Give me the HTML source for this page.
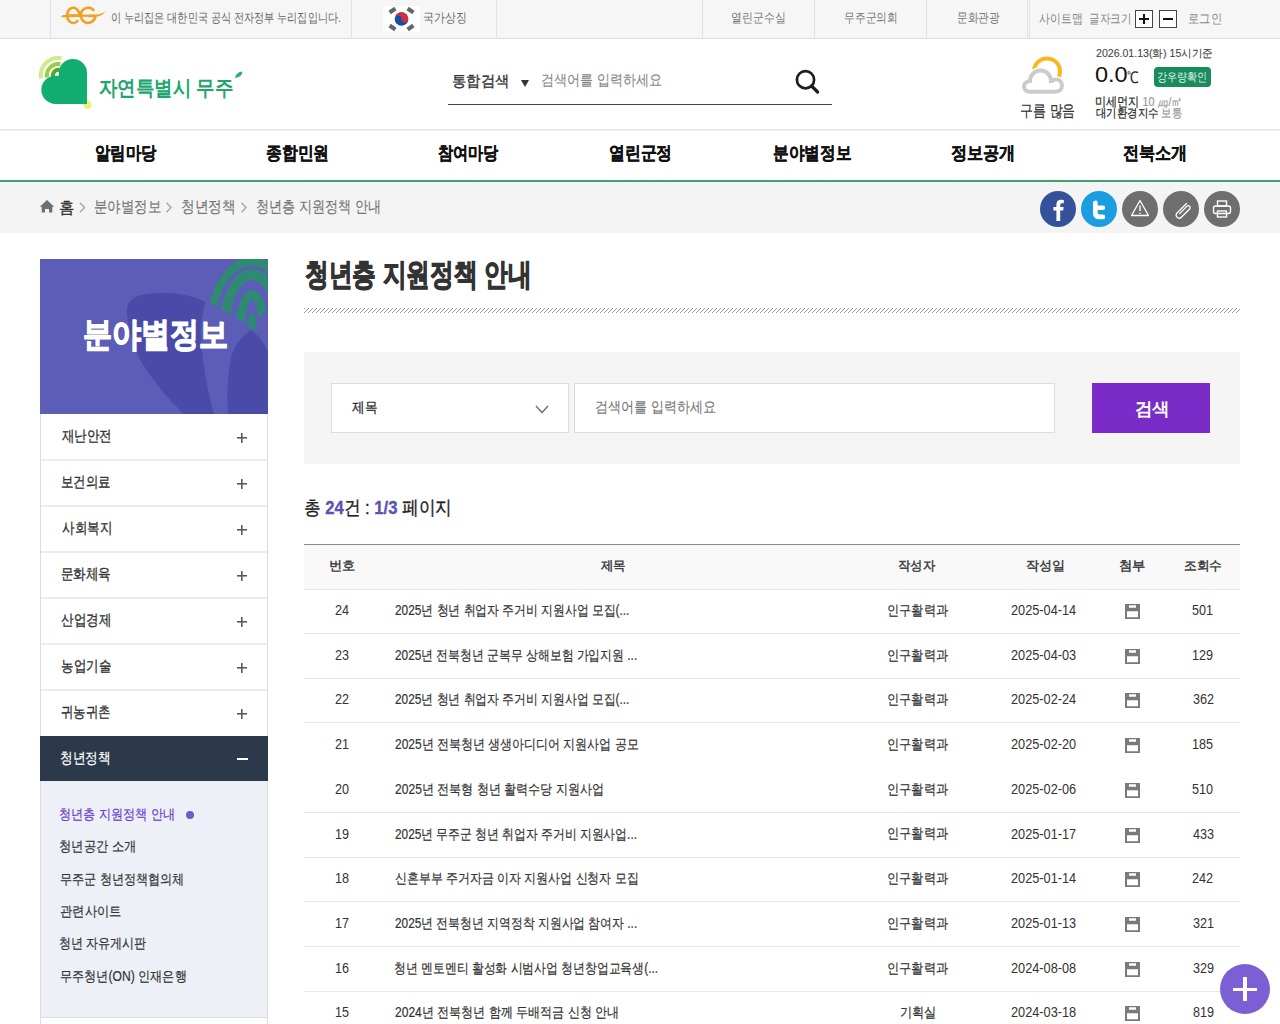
<!DOCTYPE html>
<html lang="ko"><head><meta charset="utf-8"><title>청년층 지원정책 안내</title><style>
html,body{margin:0;padding:0;background:#fff;width:1280px;height:1024px;overflow:hidden;font-family:'Liberation Sans',sans-serif}
.a{position:absolute}
.t{position:absolute;white-space:nowrap;line-height:1;transform-origin:0 0}
.vl{top:0;width:1px;height:38px;background:#e2e2e2}
.box18{width:16px;height:16px;border:1px solid #444;background:#fff}
.circ{top:190.5px;width:36px;height:36px;border-radius:50%}
.sep{left:41px;width:226px;height:2px;background:#ececec}
.plus{left:237px;width:10px;height:10px;background:linear-gradient(#5a5a5a,#5a5a5a) 0 4.2px/10px 1.6px no-repeat,linear-gradient(#5a5a5a,#5a5a5a) 4.2px 0/1.6px 10px no-repeat}
.rl{left:304px;width:936px;height:1px;background:#e8e8e8}
</style></head><body>
<!-- top bar -->
<div class="a" style="left:0;top:0;width:1280px;height:38px;background:#f6f6f6"></div>
<div class="a" style="left:0;top:38px;width:1280px;height:1px;background:#dedede"></div>
<div class="a vl" style="left:50px"></div>
<div class="a vl" style="left:351px"></div>
<div class="a vl" style="left:496px"></div>
<div class="a vl" style="left:702px"></div>
<div class="a vl" style="left:814px"></div>
<div class="a vl" style="left:926px"></div>
<div class="a vl" style="left:1027px"></div>
<div class="a vl" style="left:1029px"></div>
<svg class="a" style="left:58px;top:4px" width="50" height="22" viewBox="0 0 50 22">
  <g fill="none" stroke="#f0a126" stroke-width="2.6" stroke-linecap="round">
    <path d="M10.5 11.5 H21.5 A6.2 7.6 0 1 0 19.5 17"/>
    <path d="M35.5 6 A7.4 7.6 0 1 0 37.5 12 H31"/>
  </g>
  <path d="M3 12.5 Q4 10.6 8 10.8 L40 10.6 Q44 9.5 48 7.5 Q45 11 40 12.6 L8 13.3 Q4 13.6 3 12.5 Z" fill="#f0a126"/>
</svg>
<div class="a" style="left:383px;top:6px;width:37px;height:26px;background:#fff"></div>
<svg class="a" style="left:383px;top:6px" width="37" height="26" viewBox="0 0 37 26">
  <circle cx="18.5" cy="13" r="6.8" fill="#0f4fa8"/>
  <path d="M11.7 13 A6.8 6.8 0 0 1 25.3 13 A3.4 3.4 0 0 1 18.5 13 A3.4 3.4 0 0 0 11.7 13 Z" fill="#d72c3c"/>
  <g fill="#666">
    <rect x="6" y="2.5" width="7" height="4" transform="rotate(-35 9.5 4.5)"/>
    <rect x="24" y="2.5" width="7" height="4" transform="rotate(35 27.5 4.5)"/>
    <rect x="6" y="19.5" width="7" height="4" transform="rotate(35 9.5 21.5)"/>
    <rect x="24" y="19.5" width="7" height="4" transform="rotate(-35 27.5 21.5)"/>
  </g>
</svg>
<div class="a box18" style="left:1135px;top:10px"><div class="a" style="left:3px;top:7px;width:10px;height:2.4px;background:#111"></div><div class="a" style="left:6.8px;top:3px;width:2.4px;height:10px;background:#111"></div></div>
<div class="a box18" style="left:1159px;top:10px"><div class="a" style="left:3px;top:7px;width:10px;height:2.4px;background:#111"></div></div>

<!-- header -->
<svg class="a" style="left:36px;top:52px" width="60" height="60" viewBox="36 52 60 60">
  <g fill="none" stroke-width="4">
    <path d="M41 78.5 A17.5 17.5 0 0 1 61.5 58.3" stroke="#cfe98f"/>
    <path d="M47 77.5 A11.5 11.5 0 0 1 60.5 64.2" stroke="#98cd45"/>
    <path d="M53 76.5 A5.5 5.5 0 0 1 59.5 70" stroke="#5aa628"/>
  </g>
  <path d="M87 104 V73 A14.1 14.1 0 0 0 58.8 73 V75.7 H55.5 A14.15 14.15 0 0 0 55.5 104 Z" fill="#12ad70"/>
  <circle cx="87.5" cy="104.7" r="4.2" fill="#e6ee5e" opacity="0.85"/>
  <path d="M87 104 V100 A4.2 4.2 0 0 0 83.3 104 Z" fill="#12ad70"/>
</svg>
<svg class="a" style="left:234px;top:70px" width="10" height="10" viewBox="0 0 10 10"><path d="M1 8 Q2 2 8.5 1.5 Q8 7 1 8 Z" fill="#2fb06e"/></svg>
<div class="a" style="left:520.5px;top:79.5px;width:0;height:0;border-left:4px solid transparent;border-right:4px solid transparent;border-top:7px solid #333"></div>
<div class="a" style="left:448px;top:104px;width:384px;height:1.2px;background:#444"></div>
<svg class="a" style="left:790px;top:65px" width="34" height="34" viewBox="790 65 34 34">
  <circle cx="805.5" cy="79.7" r="8.6" fill="none" stroke="#1e1e1e" stroke-width="2.7"/>
  <path d="M811.6 86 L817.6 92" stroke="#1e1e1e" stroke-width="3.2" stroke-linecap="round"/>
</svg>
<svg class="a" style="left:1015px;top:50px" width="55" height="50" viewBox="1015 50 55 50"><circle cx="1047" cy="71.4" r="13" fill="none" stroke="#f7b81c" stroke-width="4"/><circle cx="1040.5" cy="81" r="14.0" fill="#fff"/><circle cx="1056" cy="85.5" r="9.5" fill="#fff"/><circle cx="1029" cy="86.5" r="8.5" fill="#fff"/><rect x="1029" y="86" width="27" height="9.2" fill="#fff"/><circle cx="1040.5" cy="81" r="12.5" fill="#cbcbcb"/><circle cx="1056" cy="85.5" r="8" fill="#cbcbcb"/><circle cx="1029" cy="86.5" r="7" fill="#cbcbcb"/><rect x="1029" y="86" width="27" height="7.7" fill="#cbcbcb"/><circle cx="1040.5" cy="81" r="8.5" fill="#fff"/><circle cx="1056" cy="85.5" r="4" fill="#fff"/><circle cx="1029" cy="86.5" r="3" fill="#fff"/><rect x="1029" y="83" width="27" height="6.7" fill="#fff"/></svg>
<div class="a" style="left:1153.5px;top:67.2px;width:57.3px;height:20.1px;background:#1a8b5c;border-radius:4px"></div>

<!-- nav -->
<div class="a" style="left:0;top:129px;width:1280px;height:1px;background:#e4e4e4"></div>
<div class="a" style="left:0;top:130px;width:1280px;height:1px;background:#f3f3f3"></div>
<div class="a" style="left:0;top:180px;width:1280px;height:2px;background:#43a074"></div>
<div class="a" style="left:0;top:182px;width:1280px;height:51px;background:#f4f4f4"></div>
<svg class="a" style="left:39px;top:199px" width="16" height="15" viewBox="39 199 16 15">
  <path d="M47 200 L54.2 206.8 L52.3 206.8 L52.3 212.5 L49 212.5 L49 209 L45 209 L45 212.5 L41.7 212.5 L41.7 206.8 L39.8 206.8 Z" fill="#6f6f6f"/>
</svg>
<svg class="a" style="left:76px;top:200px" width="180" height="16" viewBox="76 200 180 16">
  <g fill="none" stroke="#a9a9a9" stroke-width="1.5">
    <path d="M80 202.8 L84.5 207.5 L80 212.2"/>
    <path d="M166.5 202.8 L171 207.5 L166.5 212.2"/>
    <path d="M241.5 202.8 L246 207.5 L241.5 212.2"/>
  </g>
</svg>
<!-- social -->
<div class="a circ" style="left:1040px;background:#34529c"></div>
<div class="a circ" style="left:1081px;background:#1b9de0"></div>
<div class="a circ" style="left:1122px;background:#6e6e6e"></div>
<div class="a circ" style="left:1163px;background:#6e6e6e"></div>
<div class="a circ" style="left:1204px;background:#6e6e6e"></div>
<svg class="a" style="left:1040px;top:190px" width="200" height="37" viewBox="1040 190 200 37">
  <path d="M1060.2 221 V210.5 H1063.2 L1063.6 207 H1060.2 V204.8 Q1060.2 203.2 1062 203.2 H1063.8 V199.9 Q1062.6 199.7 1061 199.7 Q1056.4 199.7 1056.4 204.4 V207 H1053.4 V210.5 H1056.4 V221 Z" fill="#fff"/>
  <path d="M1094 201 Q1096.6 199.8 1097.6 201.6 V205.6 H1103 Q1105.2 205.6 1105.2 207.8 Q1105.2 210 1103 210 H1097.6 V212.3 Q1097.6 214.6 1100 214.6 H1103 Q1105.2 214.6 1105.2 216.9 Q1105.2 219.2 1103 219.2 H1099.5 Q1093 219.2 1093 213.2 V202.6 Q1093 201.6 1094 201 Z" fill="#fff"/>
  <path d="M1140 200.5 L1148.5 215.5 H1131.5 Z" fill="none" stroke="#fff" stroke-width="1.3" stroke-linejoin="round"/>
  <path d="M1140 205.5 V211" stroke="#fff" stroke-width="1.4"/><circle cx="1140" cy="213.3" r="0.8" fill="#fff"/>
  <path d="M1186.5 203.5 L1177 213 Q1175 215.6 1177.4 217.6 Q1179.8 219.2 1181.6 217 L1189.6 209 Q1190.8 207.4 1189.6 206.2 Q1188.2 205 1186.8 206.4 L1179.6 213.6" fill="none" stroke="#fff" stroke-width="1.3" stroke-linecap="round"/>
  <g fill="none" stroke="#fff" stroke-width="1.4">
    <rect x="1217.5" y="201" width="9" height="5"/>
    <rect x="1213.5" y="206" width="17" height="7.5" rx="2"/>
    <rect x="1217.5" y="211" width="9" height="6"/>
  </g>
</svg>

<!-- sidebar -->
<div class="a" style="left:40px;top:259px;width:228px;height:155px;background:#5c5db6;overflow:hidden">
<svg class="a" style="left:0;top:0" width="228" height="155" viewBox="40 259 228 155">
  <path d="M127 312 Q126 296 150 293.5 Q185 291 205 302 Q198 330 203 360 Q207 390 214 414 H184 Q160 392 140 360 Q128 334 127 312 Z" fill="#4a4aa8"/>
  <path d="M228 414 Q226 385 231 356 Q238 338 251 330 Q262 338 268 352 V414 Z" fill="#4a4aa8"/>
  <defs><clipPath id="wedge"><path d="M252 326.5 L150 269.4 L150 240 L300 240 L300 269.4 Z"/></clipPath></defs>
  <g clip-path="url(#wedge)" fill="#2f8a73" fill-rule="evenodd">
    <path d="M206 331 A46 74 0 0 1 298 331 Z M214 331 A38 65 0 0 1 290 331 Z"/>
    <path d="M219 331 A33 62 0 0 1 285 331 Z M229 331 A23 51 0 0 1 275 331 Z"/>
    <path d="M235 331 A17 41 0 0 1 269 331 Z M245 331 A7 31 0 0 1 259 331 Z"/>
  </g>
  <path d="M252.5 312 Q257.5 318 256.5 325 Q255 330 252.5 330 Q250 330 248.5 325 Q247.5 318 252.5 312 Z" fill="#2f8a73"/>
</svg>
</div>
<div class="a" style="left:40px;top:414px;width:1px;height:610px;background:#dcdcdc"></div>
<div class="a" style="left:267px;top:414px;width:1px;height:610px;background:#dcdcdc"></div>
<div class="a sep" style="top:459px"></div>
<div class="a sep" style="top:505px"></div>
<div class="a sep" style="top:551px"></div>
<div class="a sep" style="top:597px"></div>
<div class="a sep" style="top:643px"></div>
<div class="a sep" style="top:689px"></div>
<div class="a plus" style="top:432.5px"></div>
<div class="a plus" style="top:478.5px"></div>
<div class="a plus" style="top:524.5px"></div>
<div class="a plus" style="top:570.5px"></div>
<div class="a plus" style="top:616.5px"></div>
<div class="a plus" style="top:662.5px"></div>
<div class="a plus" style="top:708.5px"></div>
<div class="a" style="left:40px;top:736px;width:228px;height:45px;background:#2c394b"></div>
<div class="a" style="left:237px;top:758px;width:10.5px;height:2px;background:#fff"></div>
<div class="a" style="left:41px;top:781px;width:226px;height:236px;background:#edf0f6"></div>
<div class="a" style="left:40px;top:1017px;width:228px;height:1px;background:#dcdcdc"></div>
<div class="a" style="left:185.5px;top:810.5px;width:8px;height:8px;border-radius:50%;background:#6a5ec2"></div>

<!-- content -->
<svg class="a" style="left:304px;top:308px" width="936" height="5" shape-rendering="crispEdges">
  <defs><pattern id="hat" width="4" height="5" patternUnits="userSpaceOnUse">
    <rect x="0" y="0" width="1" height="1" fill="#9a9a9a"/><rect x="3" y="1" width="1" height="1" fill="#9a9a9a"/>
    <rect x="2" y="2" width="1" height="1" fill="#9a9a9a"/><rect x="1" y="3" width="1" height="1" fill="#9a9a9a"/>
    <rect x="0" y="4" width="1" height="1" fill="#9a9a9a"/>
  </pattern></defs>
  <rect width="936" height="5" fill="url(#hat)"/>
</svg>
<div class="a" style="left:304px;top:352px;width:936px;height:112px;background:#f5f5f5"></div>
<div class="a" style="left:331px;top:383px;width:236px;height:48px;background:#fff;border:1px solid #dcdcdc"></div>
<svg class="a" style="left:534px;top:403px" width="16" height="12" viewBox="534 403 16 12"><path d="M536 406 L542 412.5 L548 406" fill="none" stroke="#777" stroke-width="1.6"/></svg>
<div class="a" style="left:574px;top:383px;width:479px;height:48px;background:#fff;border:1px solid #dcdcdc"></div>
<div class="a" style="left:1092px;top:383px;width:118px;height:50px;background:#7b2bc7"></div>
<div class="a" style="left:304px;top:544px;width:936px;height:1px;background:#8c8c8c"></div>
<div class="a" style="left:304px;top:545px;width:936px;height:44px;background:#f9f9f9"></div>
<div class="a rl" style="top:589px"></div>
<div class="a rl" style="top:633px"></div>
<div class="a rl" style="top:678px"></div>
<div class="a rl" style="top:722px"></div>
<div class="a rl" style="top:812px"></div>
<div class="a rl" style="top:857px"></div>
<div class="a rl" style="top:901px"></div>
<div class="a rl" style="top:946px"></div>
<div class="a rl" style="top:991px"></div>
<svg class="a" style="left:1125px;top:604.0px" width="15" height="15" viewBox="0 0 15 15"><path d="M0 0H15V15H0Z M4 1.2V3.8H11V1.2Z M2 7.2V13.2H13V7.2Z" fill="#7a7a7a" fill-rule="evenodd"/></svg>
<svg class="a" style="left:1125px;top:648.7px" width="15" height="15" viewBox="0 0 15 15"><path d="M0 0H15V15H0Z M4 1.2V3.8H11V1.2Z M2 7.2V13.2H13V7.2Z" fill="#7a7a7a" fill-rule="evenodd"/></svg>
<svg class="a" style="left:1125px;top:693.4px" width="15" height="15" viewBox="0 0 15 15"><path d="M0 0H15V15H0Z M4 1.2V3.8H11V1.2Z M2 7.2V13.2H13V7.2Z" fill="#7a7a7a" fill-rule="evenodd"/></svg>
<svg class="a" style="left:1125px;top:738.1px" width="15" height="15" viewBox="0 0 15 15"><path d="M0 0H15V15H0Z M4 1.2V3.8H11V1.2Z M2 7.2V13.2H13V7.2Z" fill="#7a7a7a" fill-rule="evenodd"/></svg>
<svg class="a" style="left:1125px;top:782.8px" width="15" height="15" viewBox="0 0 15 15"><path d="M0 0H15V15H0Z M4 1.2V3.8H11V1.2Z M2 7.2V13.2H13V7.2Z" fill="#7a7a7a" fill-rule="evenodd"/></svg>
<svg class="a" style="left:1125px;top:827.5px" width="15" height="15" viewBox="0 0 15 15"><path d="M0 0H15V15H0Z M4 1.2V3.8H11V1.2Z M2 7.2V13.2H13V7.2Z" fill="#7a7a7a" fill-rule="evenodd"/></svg>
<svg class="a" style="left:1125px;top:872.2px" width="15" height="15" viewBox="0 0 15 15"><path d="M0 0H15V15H0Z M4 1.2V3.8H11V1.2Z M2 7.2V13.2H13V7.2Z" fill="#7a7a7a" fill-rule="evenodd"/></svg>
<svg class="a" style="left:1125px;top:916.9px" width="15" height="15" viewBox="0 0 15 15"><path d="M0 0H15V15H0Z M4 1.2V3.8H11V1.2Z M2 7.2V13.2H13V7.2Z" fill="#7a7a7a" fill-rule="evenodd"/></svg>
<svg class="a" style="left:1125px;top:961.6px" width="15" height="15" viewBox="0 0 15 15"><path d="M0 0H15V15H0Z M4 1.2V3.8H11V1.2Z M2 7.2V13.2H13V7.2Z" fill="#7a7a7a" fill-rule="evenodd"/></svg>
<svg class="a" style="left:1125px;top:1006.3px" width="15" height="15" viewBox="0 0 15 15"><path d="M0 0H15V15H0Z M4 1.2V3.8H11V1.2Z M2 7.2V13.2H13V7.2Z" fill="#7a7a7a" fill-rule="evenodd"/></svg>
<div class="t" style="left:110.90px;top:11.38px;font-size:13px;font-weight:normal;color:#666;transform:scaleX(0.7801);-webkit-text-stroke:0px currentColor;">이 누리집은 대한민국 공식 전자정부 누리집입니다.</div>
<div class="t" style="left:423.40px;top:12.03px;font-size:12.5px;font-weight:normal;color:#666;transform:scaleX(0.8375);-webkit-text-stroke:0px currentColor;">국가상징</div>
<div class="t" style="left:731.13px;top:10.97px;font-size:13px;font-weight:normal;color:#777;transform:scaleX(0.8380);-webkit-text-stroke:0px currentColor;">열린군수실</div>
<div class="t" style="left:843.64px;top:11.08px;font-size:13px;font-weight:normal;color:#777;transform:scaleX(0.8276);-webkit-text-stroke:0px currentColor;">무주군의회</div>
<div class="t" style="left:956.79px;top:10.90px;font-size:13px;font-weight:normal;color:#777;transform:scaleX(0.8184);-webkit-text-stroke:0px currentColor;">문화관광</div>
<div class="t" style="left:1038.52px;top:12.60px;font-size:12.5px;font-weight:normal;color:#888;transform:scaleX(0.8382);-webkit-text-stroke:0px currentColor;">사이트맵</div>
<div class="t" style="left:1089.19px;top:12.60px;font-size:12.5px;font-weight:normal;color:#888;transform:scaleX(0.8085);-webkit-text-stroke:0px currentColor;">글자크기</div>
<div class="t" style="left:1187.79px;top:12.96px;font-size:12.5px;font-weight:normal;color:#888;transform:scaleX(0.8661);-webkit-text-stroke:0px currentColor;">로그인</div>
<div class="t" style="left:98.53px;top:77.52px;font-size:20.5px;font-weight:bold;color:#20a56c;transform:scaleX(0.8801);-webkit-text-stroke:0px currentColor;">자연특별시 무주</div>
<div class="t" style="left:452.10px;top:72.71px;font-size:15px;font-weight:normal;color:#333;transform:scaleX(0.9559);-webkit-text-stroke:0.35px currentColor;">통합검색</div>
<div class="t" style="left:540.53px;top:72.39px;font-size:15px;font-weight:normal;color:#888;transform:scaleX(0.8727);-webkit-text-stroke:0.1px currentColor;">검색어를 입력하세요</div>
<div class="t" style="left:1020.16px;top:102.92px;font-size:16px;font-weight:normal;color:#333;transform:scaleX(0.8100);-webkit-text-stroke:0.2px currentColor;">구름 많음</div>
<div class="t" style="left:1096.11px;top:47.69px;font-size:11px;font-weight:normal;color:#444;transform:scaleX(0.9618);-webkit-text-stroke:0.1px currentColor;">2026.01.13(화) 15시기준</div>
<div class="t" style="left:1095.20px;top:64.25px;font-size:22px;font-weight:normal;color:#111;transform:scaleX(1.0690);-webkit-text-stroke:0px currentColor;">0.0</div>
<div class="t" style="left:1126.71px;top:69.50px;font-size:16px;font-weight:normal;color:#222;transform:scaleX(0.7931);-webkit-text-stroke:0px currentColor;">℃</div>
<div class="t" style="left:1157.37px;top:71.64px;font-size:11.5px;font-weight:normal;color:#dff3e8;transform:scaleX(0.8353);-webkit-text-stroke:0px currentColor;">강우량확인</div>
<div class="t" style="left:1095.14px;top:95.70px;font-size:12.5px;font-weight:normal;color:#222;transform:scaleX(0.8561);-webkit-text-stroke:0.2px currentColor;">미세먼지 <span style="color:#999;font-weight:normal">10 ㎍/㎥</span></div>
<div class="t" style="left:1095.57px;top:107.75px;font-size:11.5px;font-weight:normal;color:#222;transform:scaleX(0.8670);-webkit-text-stroke:0.2px currentColor;">대기환경지수 <span style="color:#999">보통</span></div>
<div class="t" style="left:94.96px;top:143.52px;font-size:18px;font-weight:bold;color:#111;transform:scaleX(0.8517);-webkit-text-stroke:0.3px currentColor;">알림마당</div>
<div class="t" style="left:266.32px;top:143.53px;font-size:18px;font-weight:bold;color:#111;transform:scaleX(0.8769);-webkit-text-stroke:0.3px currentColor;">종합민원</div>
<div class="t" style="left:438.00px;top:143.53px;font-size:18px;font-weight:bold;color:#111;transform:scaleX(0.8402);-webkit-text-stroke:0.3px currentColor;">참여마당</div>
<div class="t" style="left:608.59px;top:143.78px;font-size:18px;font-weight:bold;color:#111;transform:scaleX(0.8790);-webkit-text-stroke:0.3px currentColor;">열린군정</div>
<div class="t" style="left:772.74px;top:143.80px;font-size:18px;font-weight:bold;color:#111;transform:scaleX(0.8690);-webkit-text-stroke:0.3px currentColor;">분야별정보</div>
<div class="t" style="left:951.40px;top:143.79px;font-size:18px;font-weight:bold;color:#111;transform:scaleX(0.8967);-webkit-text-stroke:0.3px currentColor;">정보공개</div>
<div class="t" style="left:1122.71px;top:143.53px;font-size:18px;font-weight:bold;color:#111;transform:scaleX(0.8934);-webkit-text-stroke:0.3px currentColor;">전북소개</div>
<div class="t" style="left:58.99px;top:199.55px;font-size:15.5px;font-weight:normal;color:#333;transform:scaleX(0.9579);-webkit-text-stroke:0.35px currentColor;">홈</div>
<div class="t" style="left:93.70px;top:198.93px;font-size:15.5px;font-weight:normal;color:#777;transform:scaleX(0.8400);-webkit-text-stroke:0.15px currentColor;">분야별정보</div>
<div class="t" style="left:181.40px;top:198.83px;font-size:15.5px;font-weight:normal;color:#777;transform:scaleX(0.8554);-webkit-text-stroke:0.15px currentColor;">청년정책</div>
<div class="t" style="left:256.04px;top:198.91px;font-size:15.5px;font-weight:normal;color:#777;transform:scaleX(0.8196);-webkit-text-stroke:0.15px currentColor;">청년층 지원정책 안내</div>
<div class="t" style="left:83.47px;top:316.87px;font-size:34px;font-weight:bold;color:#fff;transform:scaleX(0.8533);-webkit-text-stroke:1.3px currentColor;">분야별정보</div>
<div class="t" style="left:62.03px;top:427.57px;font-size:15px;font-weight:normal;color:#333;transform:scaleX(0.8315);-webkit-text-stroke:0.35px currentColor;">재난안전</div>
<div class="t" style="left:60.61px;top:474.25px;font-size:15px;font-weight:normal;color:#333;transform:scaleX(0.8278);-webkit-text-stroke:0.35px currentColor;">보건의료</div>
<div class="t" style="left:61.57px;top:520.40px;font-size:15px;font-weight:normal;color:#333;transform:scaleX(0.8347);-webkit-text-stroke:0.35px currentColor;">사회복지</div>
<div class="t" style="left:60.85px;top:566.38px;font-size:15px;font-weight:normal;color:#333;transform:scaleX(0.8305);-webkit-text-stroke:0.35px currentColor;">문화체육</div>
<div class="t" style="left:61.13px;top:612.24px;font-size:15px;font-weight:normal;color:#333;transform:scaleX(0.8364);-webkit-text-stroke:0.35px currentColor;">산업경제</div>
<div class="t" style="left:60.84px;top:657.96px;font-size:15px;font-weight:normal;color:#333;transform:scaleX(0.8340);-webkit-text-stroke:0.35px currentColor;">농업기술</div>
<div class="t" style="left:61.36px;top:704.14px;font-size:15px;font-weight:normal;color:#333;transform:scaleX(0.8297);-webkit-text-stroke:0.35px currentColor;">귀농귀촌</div>
<div class="t" style="left:60.27px;top:750.26px;font-size:15px;font-weight:normal;color:#fff;transform:scaleX(0.8470);-webkit-text-stroke:0.2px currentColor;">청년정책</div>
<div class="t" style="left:59.46px;top:806.77px;font-size:14px;font-weight:normal;color:#6b3fc9;transform:scaleX(0.8675);-webkit-text-stroke:0.2px currentColor;">청년층 지원정책 안내</div>
<div class="t" style="left:59.46px;top:839.45px;font-size:14px;font-weight:normal;color:#333;transform:scaleX(0.8779);-webkit-text-stroke:0.2px currentColor;">청년공간 소개</div>
<div class="t" style="left:59.95px;top:871.95px;font-size:14px;font-weight:normal;color:#333;transform:scaleX(0.8643);-webkit-text-stroke:0.2px currentColor;">무주군 청년정책협의체</div>
<div class="t" style="left:60.17px;top:904.18px;font-size:14px;font-weight:normal;color:#333;transform:scaleX(0.8774);-webkit-text-stroke:0.2px currentColor;">관련사이트</div>
<div class="t" style="left:59.40px;top:936.43px;font-size:14px;font-weight:normal;color:#333;transform:scaleX(0.8589);-webkit-text-stroke:0.2px currentColor;">청년 자유게시판</div>
<div class="t" style="left:59.95px;top:968.84px;font-size:14px;font-weight:normal;color:#333;transform:scaleX(0.8661);-webkit-text-stroke:0.2px currentColor;">무주청년(ON) 인재은행</div>
<div class="t" style="left:304.67px;top:259.08px;font-size:31px;font-weight:bold;color:#333;transform:scaleX(0.7651);-webkit-text-stroke:1.1px currentColor;">청년층 지원정책 안내</div>
<div class="t" style="left:351.72px;top:400.40px;font-size:14px;font-weight:normal;color:#333;transform:scaleX(0.8960);-webkit-text-stroke:0.35px currentColor;">제목</div>
<div class="t" style="left:595.49px;top:400.32px;font-size:14.5px;font-weight:normal;color:#777;transform:scaleX(0.8723);-webkit-text-stroke:0.1px currentColor;">검색어를 입력하세요</div>
<div class="t" style="left:1134.77px;top:401.30px;font-size:17.5px;font-weight:bold;color:#fff;transform:scaleX(0.9719);-webkit-text-stroke:0px currentColor;">검색</div>
<div class="t" style="left:303.89px;top:498.41px;font-size:19px;font-weight:normal;color:#222;transform:scaleX(0.8765);-webkit-text-stroke:0.35px currentColor;">총 <b style="color:#5a52b5">24</b>건 : <b style="color:#5a52b5">1/3</b> 페이지</div>
<div class="t" style="left:328.58px;top:559.22px;font-size:13px;font-weight:bold;color:#444;transform:scaleX(1.0169);-webkit-text-stroke:0px currentColor;">번호</div>
<div class="t" style="left:600.91px;top:558.96px;font-size:13px;font-weight:bold;color:#444;transform:scaleX(0.9538);-webkit-text-stroke:0px currentColor;">제목</div>
<div class="t" style="left:898.40px;top:558.89px;font-size:13px;font-weight:bold;color:#444;transform:scaleX(0.9504);-webkit-text-stroke:0px currentColor;">작성자</div>
<div class="t" style="left:1025.73px;top:558.89px;font-size:13px;font-weight:bold;color:#444;transform:scaleX(1.0047);-webkit-text-stroke:0px currentColor;">작성일</div>
<div class="t" style="left:1119.43px;top:558.92px;font-size:13px;font-weight:bold;color:#444;transform:scaleX(1.0244);-webkit-text-stroke:0px currentColor;">첨부</div>
<div class="t" style="left:1184.38px;top:559.07px;font-size:13px;font-weight:bold;color:#444;transform:scaleX(0.9777);-webkit-text-stroke:0px currentColor;">조회수</div>
<div class="t" style="left:334.90px;top:603.00px;font-size:14px;font-weight:normal;color:#333;transform:scaleX(0.9000);-webkit-text-stroke:0px currentColor">24</div>
<div class="t" style="left:394.58px;top:603.00px;font-size:14px;font-weight:normal;color:#333;transform:scaleX(0.8465);-webkit-text-stroke:0.2px currentColor">2025년 청년 취업자 주거비 지원사업 모집(...</div>
<div class="t" style="left:886.61px;top:602.95px;font-size:14px;font-weight:normal;color:#333;transform:scaleX(0.8700);-webkit-text-stroke:0.2px currentColor">인구활력과</div>
<div class="t" style="left:1011.24px;top:603.05px;font-size:14px;font-weight:normal;color:#333;transform:scaleX(0.9100);-webkit-text-stroke:0px currentColor">2025-04-14</div>
<div class="t" style="left:1192.42px;top:603.05px;font-size:14px;font-weight:normal;color:#333;transform:scaleX(0.9000);-webkit-text-stroke:0px currentColor">501</div>
<div class="t" style="left:335.01px;top:647.70px;font-size:14px;font-weight:normal;color:#333;transform:scaleX(0.9000);-webkit-text-stroke:0px currentColor">23</div>
<div class="t" style="left:394.58px;top:647.70px;font-size:14px;font-weight:normal;color:#333;transform:scaleX(0.8460);-webkit-text-stroke:0.2px currentColor">2025년 전북청년 군복무 상해보험 가입지원 ...</div>
<div class="t" style="left:886.61px;top:647.65px;font-size:14px;font-weight:normal;color:#333;transform:scaleX(0.8700);-webkit-text-stroke:0.2px currentColor">인구활력과</div>
<div class="t" style="left:1011.35px;top:647.75px;font-size:14px;font-weight:normal;color:#333;transform:scaleX(0.9100);-webkit-text-stroke:0px currentColor">2025-04-03</div>
<div class="t" style="left:1192.31px;top:647.75px;font-size:14px;font-weight:normal;color:#333;transform:scaleX(0.9000);-webkit-text-stroke:0px currentColor">129</div>
<div class="t" style="left:335.01px;top:692.40px;font-size:14px;font-weight:normal;color:#333;transform:scaleX(0.9000);-webkit-text-stroke:0px currentColor">22</div>
<div class="t" style="left:394.58px;top:692.40px;font-size:14px;font-weight:normal;color:#333;transform:scaleX(0.8465);-webkit-text-stroke:0.2px currentColor">2025년 청년 취업자 주거비 지원사업 모집(...</div>
<div class="t" style="left:886.61px;top:692.35px;font-size:14px;font-weight:normal;color:#333;transform:scaleX(0.8700);-webkit-text-stroke:0.2px currentColor">인구활력과</div>
<div class="t" style="left:1011.24px;top:692.45px;font-size:14px;font-weight:normal;color:#333;transform:scaleX(0.9100);-webkit-text-stroke:0px currentColor">2025-02-24</div>
<div class="t" style="left:1192.54px;top:692.45px;font-size:14px;font-weight:normal;color:#333;transform:scaleX(0.9000);-webkit-text-stroke:0px currentColor">362</div>
<div class="t" style="left:335.01px;top:737.10px;font-size:14px;font-weight:normal;color:#333;transform:scaleX(0.9000);-webkit-text-stroke:0px currentColor">21</div>
<div class="t" style="left:394.57px;top:737.10px;font-size:14px;font-weight:normal;color:#333;transform:scaleX(0.8561);-webkit-text-stroke:0.2px currentColor">2025년 전북청년 생생아디디어 지원사업 공모</div>
<div class="t" style="left:886.61px;top:737.05px;font-size:14px;font-weight:normal;color:#333;transform:scaleX(0.8700);-webkit-text-stroke:0.2px currentColor">인구활력과</div>
<div class="t" style="left:1011.35px;top:737.15px;font-size:14px;font-weight:normal;color:#333;transform:scaleX(0.9100);-webkit-text-stroke:0px currentColor">2025-02-20</div>
<div class="t" style="left:1192.31px;top:737.15px;font-size:14px;font-weight:normal;color:#333;transform:scaleX(0.9000);-webkit-text-stroke:0px currentColor">185</div>
<div class="t" style="left:335.01px;top:781.80px;font-size:14px;font-weight:normal;color:#333;transform:scaleX(0.9000);-webkit-text-stroke:0px currentColor">20</div>
<div class="t" style="left:394.57px;top:781.80px;font-size:14px;font-weight:normal;color:#333;transform:scaleX(0.8616);-webkit-text-stroke:0.2px currentColor">2025년 전북형 청년 활력수당 지원사업</div>
<div class="t" style="left:886.61px;top:781.75px;font-size:14px;font-weight:normal;color:#333;transform:scaleX(0.8700);-webkit-text-stroke:0.2px currentColor">인구활력과</div>
<div class="t" style="left:1011.35px;top:781.85px;font-size:14px;font-weight:normal;color:#333;transform:scaleX(0.9100);-webkit-text-stroke:0px currentColor">2025-02-06</div>
<div class="t" style="left:1192.42px;top:781.85px;font-size:14px;font-weight:normal;color:#333;transform:scaleX(0.9000);-webkit-text-stroke:0px currentColor">510</div>
<div class="t" style="left:334.90px;top:826.50px;font-size:14px;font-weight:normal;color:#333;transform:scaleX(0.9000);-webkit-text-stroke:0px currentColor">19</div>
<div class="t" style="left:394.58px;top:826.50px;font-size:14px;font-weight:normal;color:#333;transform:scaleX(0.8453);-webkit-text-stroke:0.2px currentColor">2025년 무주군 청년 취업자 주거비 지원사업...</div>
<div class="t" style="left:886.61px;top:826.45px;font-size:14px;font-weight:normal;color:#333;transform:scaleX(0.8700);-webkit-text-stroke:0.2px currentColor">인구활력과</div>
<div class="t" style="left:1011.35px;top:826.55px;font-size:14px;font-weight:normal;color:#333;transform:scaleX(0.9100);-webkit-text-stroke:0px currentColor">2025-01-17</div>
<div class="t" style="left:1192.65px;top:826.55px;font-size:14px;font-weight:normal;color:#333;transform:scaleX(0.9000);-webkit-text-stroke:0px currentColor">433</div>
<div class="t" style="left:334.90px;top:871.20px;font-size:14px;font-weight:normal;color:#333;transform:scaleX(0.9000);-webkit-text-stroke:0px currentColor">18</div>
<div class="t" style="left:394.57px;top:871.20px;font-size:14px;font-weight:normal;color:#333;transform:scaleX(0.8534);-webkit-text-stroke:0.2px currentColor">신혼부부 주거자금 이자 지원사업 신청자 모집</div>
<div class="t" style="left:886.61px;top:871.15px;font-size:14px;font-weight:normal;color:#333;transform:scaleX(0.8700);-webkit-text-stroke:0.2px currentColor">인구활력과</div>
<div class="t" style="left:1011.24px;top:871.25px;font-size:14px;font-weight:normal;color:#333;transform:scaleX(0.9100);-webkit-text-stroke:0px currentColor">2025-01-14</div>
<div class="t" style="left:1192.42px;top:871.25px;font-size:14px;font-weight:normal;color:#333;transform:scaleX(0.9000);-webkit-text-stroke:0px currentColor">242</div>
<div class="t" style="left:334.90px;top:915.90px;font-size:14px;font-weight:normal;color:#333;transform:scaleX(0.9000);-webkit-text-stroke:0px currentColor">17</div>
<div class="t" style="left:394.58px;top:915.90px;font-size:14px;font-weight:normal;color:#333;transform:scaleX(0.8460);-webkit-text-stroke:0.2px currentColor">2025년 전북청년 지역정착 지원사업 참여자 ...</div>
<div class="t" style="left:886.61px;top:915.85px;font-size:14px;font-weight:normal;color:#333;transform:scaleX(0.8700);-webkit-text-stroke:0.2px currentColor">인구활력과</div>
<div class="t" style="left:1011.35px;top:915.95px;font-size:14px;font-weight:normal;color:#333;transform:scaleX(0.9100);-webkit-text-stroke:0px currentColor">2025-01-13</div>
<div class="t" style="left:1192.54px;top:915.95px;font-size:14px;font-weight:normal;color:#333;transform:scaleX(0.9000);-webkit-text-stroke:0px currentColor">321</div>
<div class="t" style="left:334.90px;top:960.60px;font-size:14px;font-weight:normal;color:#333;transform:scaleX(0.9000);-webkit-text-stroke:0px currentColor">16</div>
<div class="t" style="left:394.37px;top:960.60px;font-size:14px;font-weight:normal;color:#333;transform:scaleX(0.8465);-webkit-text-stroke:0.2px currentColor">청년 멘토멘티 활성화 시범사업 청년창업교육생(...</div>
<div class="t" style="left:886.61px;top:960.55px;font-size:14px;font-weight:normal;color:#333;transform:scaleX(0.8700);-webkit-text-stroke:0.2px currentColor">인구활력과</div>
<div class="t" style="left:1011.35px;top:960.65px;font-size:14px;font-weight:normal;color:#333;transform:scaleX(0.9100);-webkit-text-stroke:0px currentColor">2024-08-08</div>
<div class="t" style="left:1192.54px;top:960.65px;font-size:14px;font-weight:normal;color:#333;transform:scaleX(0.9000);-webkit-text-stroke:0px currentColor">329</div>
<div class="t" style="left:334.90px;top:1005.30px;font-size:14px;font-weight:normal;color:#333;transform:scaleX(0.9000);-webkit-text-stroke:0px currentColor">15</div>
<div class="t" style="left:394.57px;top:1005.30px;font-size:14px;font-weight:normal;color:#333;transform:scaleX(0.8605);-webkit-text-stroke:0.2px currentColor">2024년 전북청년 함께 두배적금 신청 안내</div>
<div class="t" style="left:899.76px;top:1005.25px;font-size:14px;font-weight:normal;color:#333;transform:scaleX(0.8700);-webkit-text-stroke:0.2px currentColor">기획실</div>
<div class="t" style="left:1011.35px;top:1005.35px;font-size:14px;font-weight:normal;color:#333;transform:scaleX(0.9100);-webkit-text-stroke:0px currentColor">2024-03-18</div>
<div class="t" style="left:1192.54px;top:1005.35px;font-size:14px;font-weight:normal;color:#333;transform:scaleX(0.9000);-webkit-text-stroke:0px currentColor">819</div>
<div class="a" style="left:1220px;top:964px;width:50px;height:50px;border-radius:50%;background:#7c5fd5"></div>
<div class="a" style="left:1233px;top:987.5px;width:24px;height:3.4px;background:#fff"></div>
<div class="a" style="left:1243.3px;top:977px;width:3.4px;height:24px;background:#fff"></div>

</body></html>
